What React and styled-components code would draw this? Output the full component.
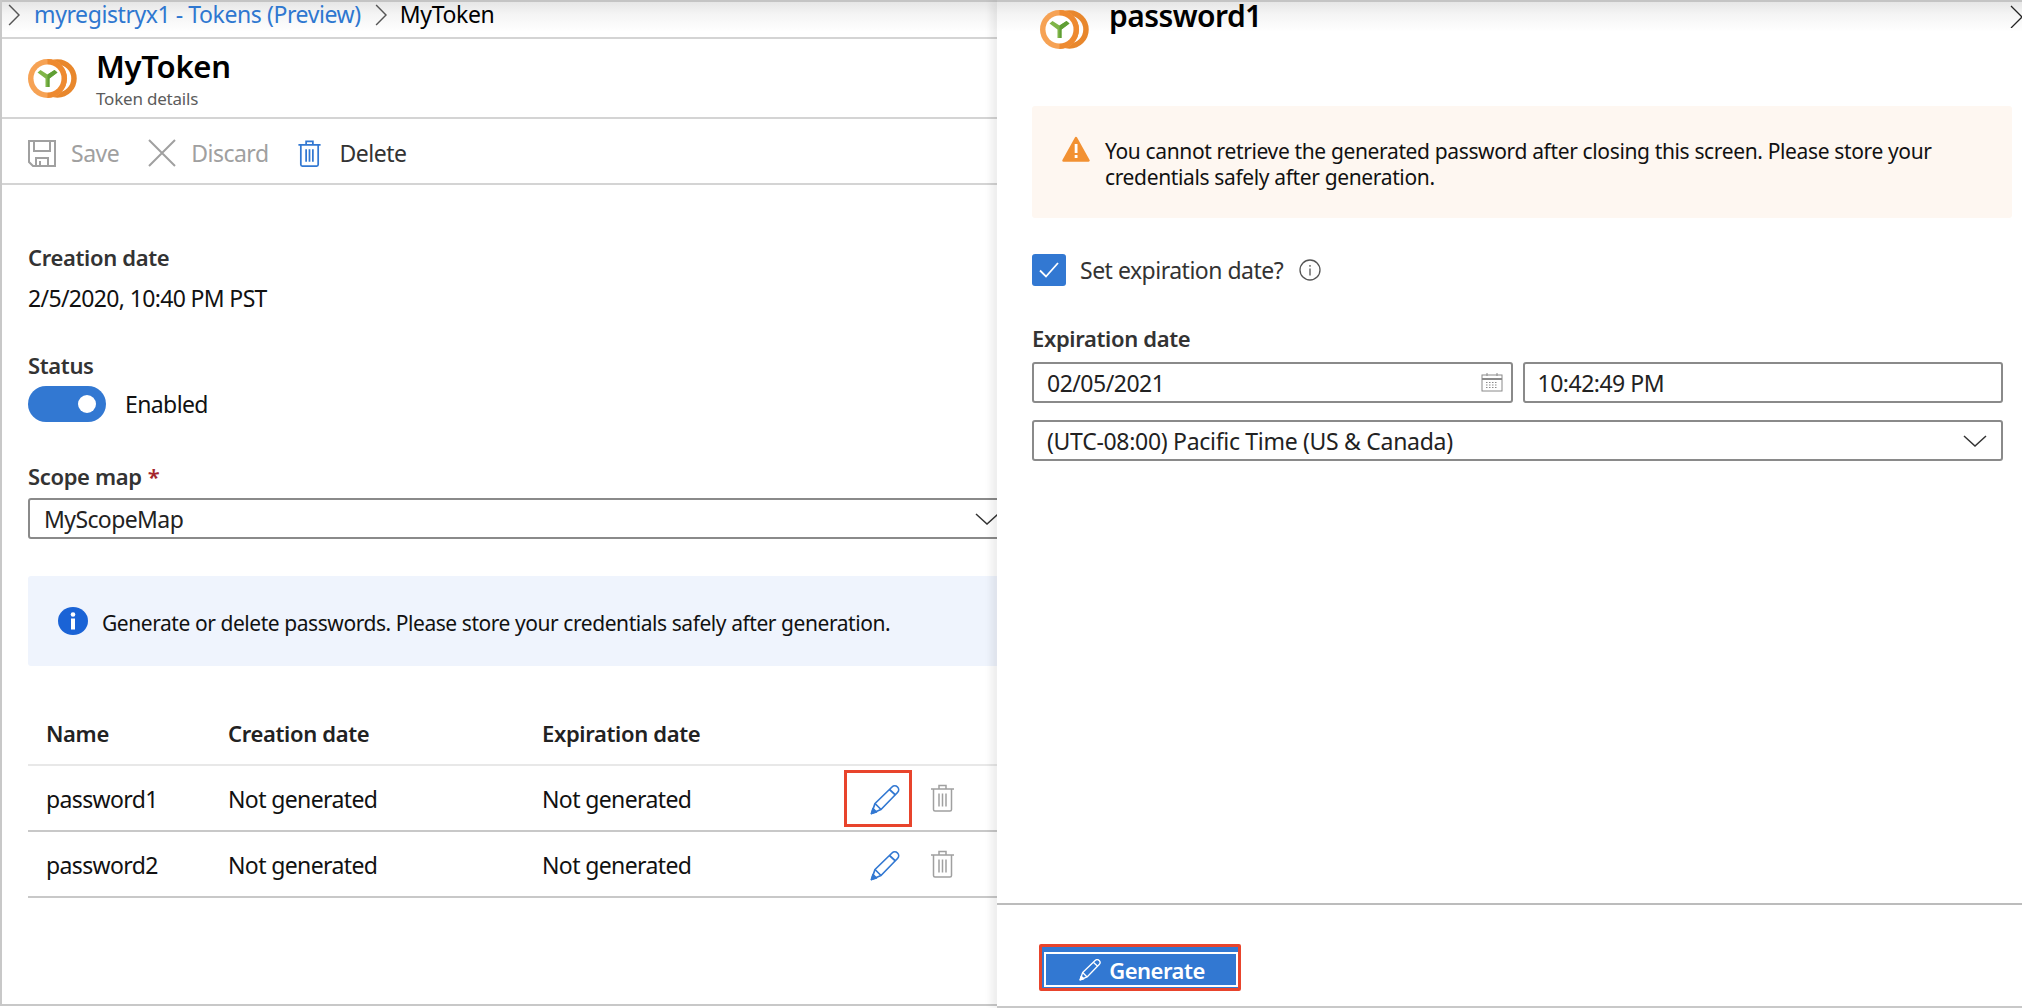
import React from 'react'
import styled, { createGlobalStyle } from 'styled-components'

const GlobalStyle = createGlobalStyle`
  html, body {
    margin: 0;
    padding: 0;
    background: #fff;
  }
  body {
    font-family: "Noto Sans", "Open Sans", "Liberation Sans", sans-serif;
    font-size: 23px;
    color: #111;
  }
  * {
    box-sizing: border-box;
  }
  svg {
    flex-shrink: 0;
  }
`

const Page = styled.div`
  width: 2022px;
  height: 1008px;
  display: flex;
  overflow: hidden;
`
const LeftPanel = styled.div`
  flex: 0 0 997px;
  height: 1006px;
  overflow: hidden;
  border-left: 2px solid #c8c8c8;
  border-bottom: 2px solid #c8c8c8;
`
const TopGradient = styled.div`
  background: linear-gradient(#e6e6e6 0, #f4f4f4 12px, #fff 30px);
  border-top: 2px solid #c4c4c4;
`
const Breadcrumb = styled(TopGradient)`
  height: 39px;
  display: flex;
  align-items: center;
  padding: 0 0 10px 6px;
  border-bottom: 2px solid #d4d4d4;
  white-space: nowrap;
  line-height: 25px;
  letter-spacing: -0.42px;
`
const CrumbLink = styled.a`
  color: #2e77d0;
  margin: 0 14px 0 14px;
`
const CrumbCurrent = styled.span`
  color: #000;
  margin-left: 13px;
  letter-spacing: -0.35px;
`
const Header = styled.div`
  height: 80px;
  display: flex;
  align-items: center;
  padding-left: 26px;
  border-bottom: 2px solid #d4d4d4;
`
const TitleBlock = styled.div`
  margin-left: 19px;
  display: flex;
  flex-direction: column;
  padding-top: 3px;
`
const Title = styled.h1`
  margin: 0;
  font-size: 31px;
  line-height: 36px;
  font-weight: 600;
  color: #000;
  letter-spacing: -0.25px;
`
const Subtitle = styled.div`
  margin-top: 3px;
  font-size: 17px;
  line-height: 24px;
  color: #5c5c5c;
  letter-spacing: -0.2px;
`
const Toolbar = styled.div`
  height: 66px;
  display: flex;
  align-items: center;
  padding: 4px 0 0 26px;
  border-bottom: 2px solid #d4d4d4;
`
const ToolButton = styled.div`
  display: flex;
  align-items: center;
  gap: ${p => p.$gap || 16}px;
  margin-right: 29px;
  letter-spacing: -0.5px;
  color: ${p => (p.$disabled ? '#a0a0a0' : '#333')};
`
const Body = styled.div`
  padding: 58px 0 0 26px;
`
const Label = styled.div`
  font-size: 22px;
  line-height: 28px;
  padding-bottom: 2px;
  font-weight: 600;
  color: #333;
  letter-spacing: -0.35px;
`
const Value = styled.div`
  line-height: 30px;
  margin: 10px 0 38px;
  color: #111;
  letter-spacing: -0.65px;
`
const ToggleRow = styled.div`
  display: flex;
  align-items: center;
  gap: 19px;
  margin: 5px 0 40px;
  letter-spacing: -0.6px;
`
const Toggle = styled.div`
  width: 78px;
  height: 36px;
  border-radius: 18px;
  background: #3278d2;
  display: flex;
  align-items: center;
  justify-content: flex-end;
  padding-right: 10px;
`
const Knob = styled.div`
  width: 18px;
  height: 18px;
  border-radius: 50%;
  background: #fff;
`
const Required = styled.span`
  color: #a4262c;
  margin-left: 6px;
`
const Select = styled.div`
  height: 41px;
  width: 100%;
  border: 2px solid #8a8a8a;
  border-radius: 3px;
  display: flex;
  align-items: center;
  justify-content: space-between;
  padding: 0 ${p => p.$right || 14}px 0 13px;
  background: #fff;
  color: #222;
  letter-spacing: ${p => p.$spacing || -0.45}px;
  white-space: nowrap;
`
const ScopeSelect = styled(Select)`
  margin-top: 6px;
  padding-right: 0;
  padding-left: 14px;
  width: calc(100% + 4px);
  letter-spacing: -0.6px;
`
const InfoBox = styled.div`
  height: 90px;
  margin: 37px 0 34px;
  width: calc(100% + 4px);
  background: #eff4fd;
  border-radius: 3px;
  display: flex;
  align-items: center;
  gap: 14px;
  padding-left: 30px;
  font-size: 21px;
  letter-spacing: -0.44px;
  white-space: nowrap;
`
const InfoText = styled.span`
  padding-top: 3px;
`
const Row = styled.div`
  display: grid;
  grid-template-columns: 182px 314px 302px 1fr;
  align-items: center;
  height: 66px;
  padding: 2px 0 0 18px;
  width: calc(100% + 4px);
  border-bottom: 2px solid ${p => (p.$head ? '#e8e8e8' : '#c8c8c8')};
  letter-spacing: ${p => (p.$head ? -0.35 : -0.62)}px;
  font-weight: ${p => (p.$head ? 600 : 400)};
  font-size: ${p => (p.$head ? '22px' : '23px')};
  color: ${p => (p.$head ? '#222' : '#111')};
`
const Actions = styled.div`
  display: flex;
  align-items: center;
  margin-top: -2px;
`
const EditCell = styled.div`
  width: 68px;
  height: 57px;
  border: 3px solid ${p => (p.$marked ? '#e8442c' : 'transparent')};
  display: flex;
  align-items: center;
  padding: 3px 0 0 23px;
  margin-right: 19px;
`
const RightPanel = styled.div`
  flex: 1;
  height: 1008px;
  position: relative;
  display: flex;
  flex-direction: column;
  background: #fff;
  box-shadow: -6px 0 7px rgba(0, 0, 0, 0.07);
`
const SideHead = styled(TopGradient)`
  height: 106px;
  display: flex;
  align-items: flex-start;
  padding: 8px 0 0 43px;
  overflow: hidden;
`
const SideTitle = styled.h2`
  margin: -8px 0 0 20px;
  font-size: 30px;
  line-height: 28px;
  font-weight: 600;
  color: #000;
  letter-spacing: -0.55px;
`
const CloseIcon = styled.div`
  margin-left: auto;
  margin-top: -6px;
  width: 12px;
  height: 24px;
  overflow: hidden;
`
const Warning = styled.div`
  height: 112px;
  margin: 0 10px 0 35px;
  background: #fef7f1;
  border-radius: 3px;
  display: flex;
  align-items: flex-start;
  gap: 15px;
  padding: 30px 60px 0 30px;
  font-size: 21px;
  line-height: 26px;
  letter-spacing: -0.36px;
`
const WarningText = styled.span`
  padding-top: 2px;
`
const CheckRow = styled.div`
  display: flex;
  align-items: center;
  margin: 36px 0 0 35px;
  color: #333;
  letter-spacing: -0.5px;
`
const Checkbox = styled.div`
  width: 34px;
  height: 32px;
  border-radius: 3px;
  background: #3278d2;
  display: flex;
  align-items: center;
  justify-content: center;
  margin-right: 14px;
`
const Tip = styled.div`
  display: flex;
  margin-left: 16px;
`
const Form = styled.div`
  margin: 38px 19px 0 35px;
`
const InputRow = styled.div`
  display: grid;
  grid-template-columns: 1fr 1fr;
  gap: 10px;
  margin: 8px 0 17px;
`
const Footer = styled.div`
  margin-top: auto;
  height: 105px;
  border-top: 2px solid #bcbcbc;
  border-bottom: 2px solid #c8c8c8;
  padding: 39px 0 0 42px;
`
const GenerateButton = styled.div`
  width: 202px;
  height: 47px;
  border: 3px solid #e8442c;
  background: #3278d2;
  padding-top: 5px;
  padding-left: 2px;
  border-radius: 2px;
`
const GenerateInner = styled.div`
  height: 35px;
  border: 2px solid #fff;
  display: flex;
  align-items: center;
  justify-content: center;
  gap: 8px;
  padding-left: 2px;
  color: #fff;
  font-size: 22px;
  font-weight: 600;
  letter-spacing: -0.5px;
`

const Chevron = ({ size = 22, color = '#555' }) => (
  <svg width={size * 0.55} height={size} viewBox="0 0 11 20" fill="none" stroke={color} strokeWidth="1.3">
    <path d="M1 1l9 9-9 9" />
  </svg>
)

const ChevronDown = () => (
  <svg width="24" height="12" viewBox="0 0 24 12" fill="none" stroke="#333" strokeWidth="1.5">
    <path d="M1 1l11 10L23 1" />
  </svg>
)

const Logo = () => (
  <svg width="49" height="39" viewBox="0 0 49 39">
    <circle cx="29.5" cy="19.5" r="16.5" fill="none" stroke="#e8872c" strokeWidth="5.5" />
    <circle cx="19.5" cy="19.5" r="19.5" fill="#f6a254" />
    <path d="M19.5 0a19.5 19.5 0 0 1 0 39z" fill="#ee8a30" />
    <circle cx="19.5" cy="19.5" r="14" fill="#fff" />
    <path d="M9.5 13.5l3-2.5 7 4.5 7-4.5 3 2.5-8 6v8.5h-4V19.5z" fill="#7fb548" />
    <path d="M19.5 15.5l7-4.5 3 2.5-8 6v8.5h-2z" fill="#5f9e35" />
  </svg>
)

const SaveIcon = () => (
  <svg width="28" height="27" viewBox="0 0 28 27" fill="none" stroke="#a0a0a0" strokeWidth="2">
    <path d="M1 1h26v25H5l-4-4z" />
    <path d="M6 1v10h16V1M8 26v-8h12v8M12 21v5" />
  </svg>
)

const CrossIcon = () => (
  <svg width="28" height="28" viewBox="0 0 28 28" stroke="#a0a0a0" strokeWidth="2">
    <path d="M1 1l26 26M27 1L1 27" />
  </svg>
)

const TrashIcon = ({ color = '#a0a0a0', width = 23, height = 28, weight = 1.5 }) => (
  <svg width={width} height={height} viewBox="0 0 23 28" fill="none" stroke={color} strokeWidth={weight}>
    <path d="M0 5h23M8 5V1.500h7V5M2.500 5v20.500q0 1.500 1.500 1.500h15q1.500 0 1.500-1.500V5" />
    <path d="M8 9.500v13M11.500 9.500v13M15 9.500v13" />
  </svg>
)

const PencilIcon = ({ color = '#3278d2', size = 30, weight = 1.7 }) => (
  <svg width={size} height={size} viewBox="0 0 30 30" fill="none" stroke={color} strokeWidth={weight} strokeLinejoin="round">
    <path d="M1.500 28.500L5 18.500 22 2a3.800 3.800 0 0 1 5.500 5.500L11 24.500z" />
    <path d="M5 18.500l6 6M19.500 4.500l6 5.500" />
    <path d="M1.500 28.500l1.500-5 3.500 3.500z" fill={color} />
  </svg>
)

const InfoIcon = () => (
  <svg width="30" height="28" viewBox="0 0 30 28">
    <ellipse cx="15" cy="14" rx="15" ry="14" fill="#1a63d6" />
    <rect x="13" y="11.500" width="4" height="11" fill="#fff" />
    <circle cx="15" cy="7.500" r="2.300" fill="#fff" />
  </svg>
)

const WarningIcon = () => (
  <svg width="28" height="26" viewBox="0 0 28 26">
    <path d="M14 2L26.500 24.500H1.500z" fill="#f29132" stroke="#f29132" strokeWidth="2.500" strokeLinejoin="round" />
    <rect x="12.700" y="8" width="2.800" height="9" fill="#fff" />
    <rect x="12.700" y="19" width="2.800" height="3" fill="#fff" />
  </svg>
)

const CheckIcon = () => (
  <svg width="20" height="16" viewBox="0 0 20 16" fill="none" stroke="#fff" strokeWidth="1.800">
    <path d="M1 8.500l6 6L19 1" />
  </svg>
)

const SmallInfo = () => (
  <svg width="22" height="22" viewBox="0 0 22 22" fill="none" stroke="#555" strokeWidth="1.300">
    <circle cx="11" cy="11" r="10" />
    <path d="M11 9.500v7M11 6v1.800" />
  </svg>
)

const CalendarIcon = () => (
  <svg width="22" height="19" viewBox="0 0 22 19" fill="none" stroke="#8a8a8a" strokeWidth="1">
    <path d="M6 0v3M16 0v3" />
    <rect x="1" y="2" width="20" height="16" />
    <path d="M1 6h20" strokeWidth="2" />
    <path d="M5 9.500h12M5 12h12M5 14.500h12" strokeDasharray="1.500 1.500" />
  </svg>
)

const passwords = [
  { name: 'password1', marked: true },
  { name: 'password2', marked: false },
]

export default function App() {
  return (
    <Page>
      <GlobalStyle />
      <LeftPanel>
        <Breadcrumb>
          <Chevron />
          <CrumbLink>myregistryx1 - Tokens (Preview)</CrumbLink>
          <Chevron />
          <CrumbCurrent>MyToken</CrumbCurrent>
        </Breadcrumb>
        <Header>
          <Logo />
          <TitleBlock>
            <Title>MyToken</Title>
            <Subtitle>Token details</Subtitle>
          </TitleBlock>
        </Header>
        <Toolbar>
          <ToolButton $disabled $gap={15}>
            <SaveIcon />
            Save
          </ToolButton>
          <ToolButton $disabled $gap={15}>
            <CrossIcon />
            Discard
          </ToolButton>
          <ToolButton $gap={19}>
            <TrashIcon color="#3278d2" height={27} weight={1.8} />
            Delete
          </ToolButton>
        </Toolbar>
        <Body>
          <Label>Creation date</Label>
          <Value>2/5/2020, 10:40 PM PST</Value>
          <Label>Status</Label>
          <ToggleRow>
            <Toggle>
              <Knob />
            </Toggle>
            Enabled
          </ToggleRow>
          <Label>
            Scope map<Required>*</Required>
          </Label>
          <ScopeSelect>
            MyScopeMap
            <ChevronDown />
          </ScopeSelect>
          <InfoBox>
            <InfoIcon />
            <InfoText>Generate or delete passwords. Please store your credentials safely after generation.</InfoText>
          </InfoBox>
          <Row $head>
            <span>Name</span>
            <span>Creation date</span>
            <span>Expiration date</span>
          </Row>
          {passwords.map(p => (
            <Row key={p.name}>
              <span>{p.name}</span>
              <span>Not generated</span>
              <span>Not generated</span>
              <Actions>
                <EditCell $marked={p.marked}>
                  <PencilIcon />
                </EditCell>
                <TrashIcon />
              </Actions>
            </Row>
          ))}
        </Body>
      </LeftPanel>
      <RightPanel>
        <SideHead>
          <Logo />
          <SideTitle>password1</SideTitle>
          <CloseIcon>
            <svg width="24" height="24" viewBox="0 0 24 24" fill="none" stroke="#222" strokeWidth="1.300">
              <path d="M1 1l11 11L1 23" />
            </svg>
          </CloseIcon>
        </SideHead>
        <Warning>
          <WarningIcon />
          <WarningText>
            You cannot retrieve the generated password after closing this screen. Please store your credentials safely after generation.
          </WarningText>
        </Warning>
        <CheckRow>
          <Checkbox>
            <CheckIcon />
          </Checkbox>
          Set expiration date?
          <Tip>
            <SmallInfo />
          </Tip>
        </CheckRow>
        <Form>
          <Label>Expiration date</Label>
          <InputRow>
            <Select $right={8} $spacing={-0.5}>
              02/05/2021
              <CalendarIcon />
            </Select>
            <Select $spacing={-0.5}>10:42:49 PM</Select>
          </InputRow>
          <Select $spacing={-0.3}>
            (UTC-08:00) Pacific Time (US &amp; Canada)
            <ChevronDown />
          </Select>
        </Form>
        <Footer>
          <GenerateButton>
            <GenerateInner>
              <PencilIcon color="#fff" size={22} weight={1.800} />
              Generate
            </GenerateInner>
          </GenerateButton>
        </Footer>
      </RightPanel>
    </Page>
  )
}
